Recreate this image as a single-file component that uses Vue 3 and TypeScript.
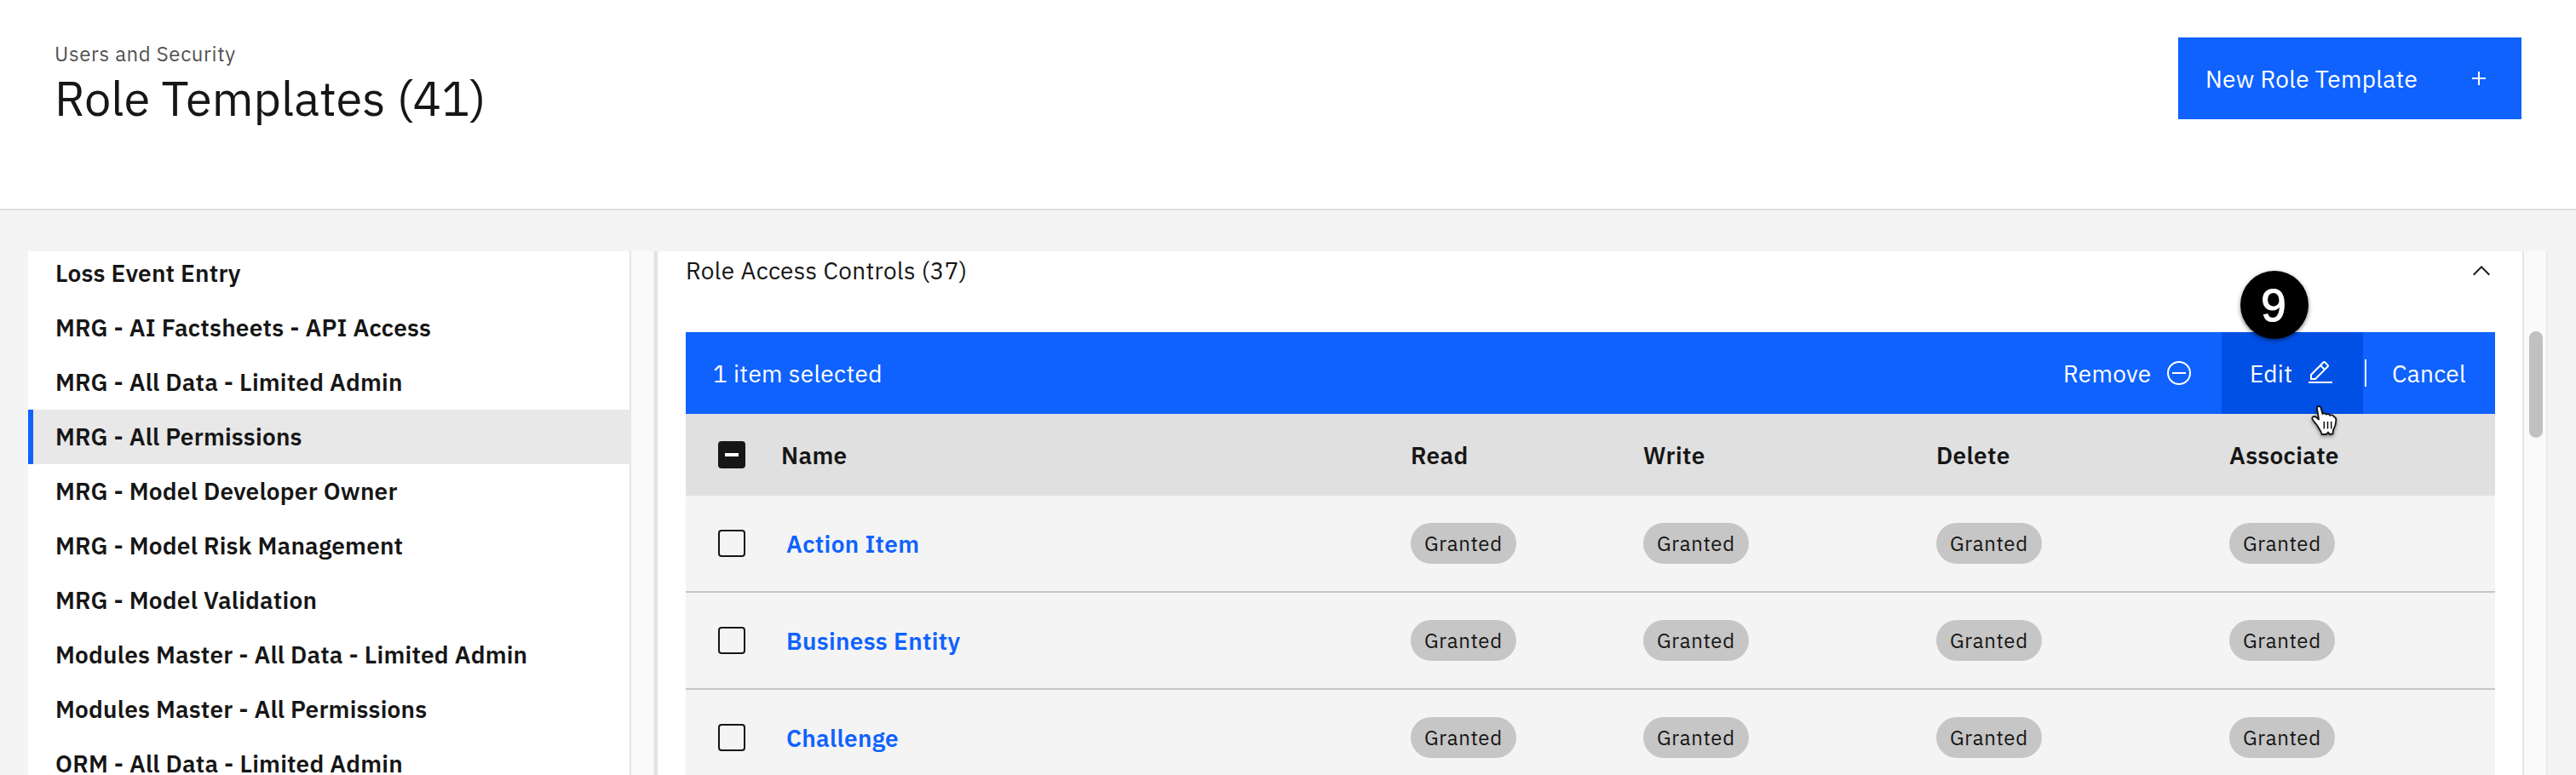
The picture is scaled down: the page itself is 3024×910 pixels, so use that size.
<script setup lang="ts">
const roles: string[] = [
  'Loss Event Entry',
  'MRG - AI Factsheets - API Access',
  'MRG - All Data - Limited Admin',
  'MRG - All Permissions',
  'MRG - Model Developer Owner',
  'MRG - Model Risk Management',
  'MRG - Model Validation',
  'Modules Master - All Data - Limited Admin',
  'Modules Master - All Permissions',
  'ORM - All Data - Limited Admin',
]
const activeRole = 'MRG - All Permissions'
const columns: string[] = ['Read', 'Write', 'Delete', 'Associate']
const rows: string[] = ['Action Item', 'Business Entity', 'Challenge']
</script>

<template>
  <div class="page">
    <header class="header">
      <div class="heading">
        <div class="crumb">Users and Security</div>
        <h1 class="title">Role Templates (41)</h1>
      </div>
      <button class="new-btn">
        <span>New Role Template</span>
        <svg width="32" height="32" viewBox="0 0 32 32" fill="#fff"><path d="M17 15V8h-2v7H8v2h7v7h2v-7h7v-2z" /></svg>
      </button>
    </header>

    <div class="body">
      <nav class="sidebar">
        <div v-for="r in roles" :key="r" class="role" :class="{ active: r === activeRole }">{{ r }}</div>
      </nav>
      <div class="track left-track"></div>

      <main class="panel">
        <div class="section-head">
          <span class="section-title">Role Access Controls (37)</span>
          <svg width="32" height="32" viewBox="0 0 16 16" fill="#161616"><path d="M8 5l5 5-.7.7L8 6.4l-4.3 4.3L3 10z" /></svg>
        </div>

        <div class="batch">
          <span class="count">1 item selected</span>
          <div class="actions">
            <div class="action remove">
              <span>Remove</span>
              <svg width="32" height="32" viewBox="0 0 32 32" fill="none" stroke="#fff" stroke-width="2"><circle cx="16" cy="16" r="13" /><path d="M8 16h16" /></svg>
            </div>
            <div class="action edit">
              <span>Edit</span>
              <svg width="32" height="32" viewBox="0 0 32 32" fill="#fff"><path d="M2 26h28v2H2zM25.4 9c.8-.8.8-2 0-2.8l-3.6-3.6c-.8-.8-2-.8-2.8 0l-15 15V24h6.4zM20.4 4L24 7.6l-3 3L17.4 7zM6 22v-3.6l10-10 3.6 3.6-10 10z" /></svg>
              <div class="step">9</div>
              <svg class="pointer" width="36" height="46" viewBox="0 0 36 46">
                <path d="M8 5.500C7.600 2.500 11.500 2 12.500 5L14.500 12C16 10.800 18 11.200 18.800 12.600 20.300 11.600 22.500 12 23.200 13.800 25 12.800 27.500 13.500 28 15.500 30 16 30.500 18 30.300 20 30 25 29.500 27 27 31L26.500 35.500 22.500 36 21 33.500 19 36 13.500 36C13 32 11 31 9 27 7.500 23.500 3.500 21 2.500 18 1.800 15.500 4.500 14 7 15.800L10 18.500z" fill="#fff" stroke="#111" stroke-width="1.800" stroke-linejoin="round" />
                <path d="M16.300 21v8.500M20.500 21v8.500M24.700 21v8.500" stroke="#111" stroke-width="1.500" />
              </svg>
            </div>
            <i class="divider"></i>
            <div class="action cancel"><span>Cancel</span></div>
          </div>
        </div>

        <div class="grid head">
          <i class="box mixed"></i>
          <span class="th">Name</span>
          <span v-for="c in columns" :key="c" class="th">{{ c }}</span>
        </div>
        <div v-for="n in rows" :key="n" class="grid row">
          <i class="box"></i>
          <a class="link">{{ n }}</a>
          <span v-for="c in columns" :key="c" class="tag">Granted</span>
        </div>
      </main>
      <div class="track right-track"><i class="thumb"></i></div>
    </div>
  </div>
</template>

<style>
body { margin: 0; overflow: hidden; }
</style>

<style scoped>
* { box-sizing: border-box; }
.page { width: 3024px; height: 910px; overflow: hidden; background: #f4f4f4; color: #161616; font-family: "IBM Plex Sans", Roboto, "Liberation Sans", sans-serif; font-size: 28px; letter-spacing: 0.32px; display: flex; flex-direction: column; white-space: nowrap; }
.header { height: 247px; flex: none; background: #fff; border-bottom: 2px solid #e0e0e0; display: flex; justify-content: space-between; padding: 44px 64px 0; }
.heading { margin-top: -1px; }
.crumb { height: 40px; line-height: 40px; font-size: 24px; letter-spacing: 0.64px; color: #525252; }
.title { margin: 0; height: 64px; line-height: 64px; font-size: 56px; font-weight: 400; letter-spacing: 0; }
.new-btn { width: 403px; height: 96px; border: 0; background: #0f62fe; color: #fff; font: inherit; letter-spacing: inherit; display: flex; align-items: center; justify-content: space-between; padding: 0 34px 0 32px; }
.body { flex: 1; min-height: 0; margin-top: 48px; padding-left: 33px; display: flex; }
.sidebar { width: 706px; background: #fff; overflow: hidden; letter-spacing: 0.2px; }
.role { height: 64px; line-height: 64px; padding-left: 32px; font-weight: 600; }
.role:first-child { height: 58px; line-height: 52px; }
.role.active { background: #e8e8e8; border-left: 6px solid #0f62fe; padding-left: 26px; }
.track { background: #fafafa; border-left: 2px solid #e6e6e6; border-right: 2px solid #ebebeb; }
.left-track { width: 30px; }
.panel { width: 2192px; background: #fff; border-left: 2px solid #dcdcdc; box-shadow: inset 2px 0 #f0f0f0; padding: 0 32px 0 34px; }
.section-head { height: 95px; display: flex; justify-content: space-between; align-items: flex-start; padding-top: 7px; }
.section-title { line-height: 32px; }
.batch { height: 96px; background: #0f62fe; color: #fff; display: flex; align-items: center; justify-content: space-between; padding-left: 32px; }
.actions { display: flex; align-items: center; height: 96px; }
.action { height: 96px; display: flex; align-items: center; justify-content: space-between; }
.action svg { flex: none; }
.remove { width: 186px; padding-right: 34px; }
.edit { position: relative; width: 166px; padding: 0 34px 0 33px; background: #0050e6; }
.divider { width: 2px; height: 32px; margin-left: 2px; background: #fff; }
.cancel { padding: 0 34px 0 30px; }
.step { position: absolute; left: 22px; top: -72px; width: 80px; height: 80px; border-radius: 50%; background: #000; color: #fff; font: 400 53px/82px "Liberation Sans", Arial, sans-serif; letter-spacing: 0; padding-right: 2px; -webkit-text-stroke: 1.2px #fff; text-align: center; box-shadow: 0 2px 5px rgba(0, 0, 0, 0.5); }
.action .pointer { position: absolute; left: 104px; top: 84px; filter: drop-shadow(0 2px 2px rgba(0, 0, 0, 0.4)); }
.grid { display: grid; grid-template-columns: 74px 739px 273px 344px 344px auto; align-items: center; padding-left: 38px; }
.head { height: 96px; background: #e0e0e0; font-weight: 600; }
.row { height: 114px; background: #f4f4f4; border-bottom: 2px solid #c6c6c6; }
.box { width: 32px; height: 32px; border: 2px solid #161616; border-radius: 4px; display: flex; align-items: center; justify-content: center; }
.mixed { background: #161616; }
.mixed::after { content: ""; width: 16px; height: 4px; background: #fff; }
.link { color: #0f62fe; font-weight: 600; padding-left: 6px; }
.tag { justify-self: start; height: 48px; line-height: 48px; padding: 0 16px; border-radius: 24px; background: #c6c6c6; font-size: 24px; letter-spacing: 0.64px; }
.right-track { width: 30px; padding-top: 94px; }
.thumb { display: block; width: 16px; height: 125px; margin-left: 6px; border-radius: 8px; background: #c1c1c1; }
</style>
